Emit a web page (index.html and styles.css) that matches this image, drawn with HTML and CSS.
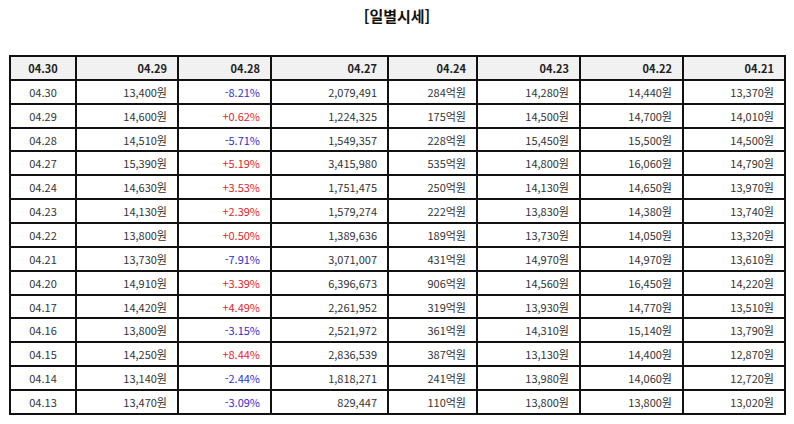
FILE: index.html
```html
<!DOCTYPE html>
<html lang="ko">
<head>
<meta charset="utf-8">
<title>일별시세</title>
<link rel="stylesheet" href="styles.css">
</head>
<body>
<div class="page">
  <h1 class="title">[일별시세]</h1>
  <table class="daily">
    <colgroup>
      <col class="c1"><col class="c2"><col class="c3"><col class="c4">
      <col class="c5"><col class="c6"><col class="c7"><col class="c8">
    </colgroup>
    <thead>
      <tr>
        <th class="center">04.30</th><th>04.29</th><th>04.28</th><th>04.27</th>
        <th>04.24</th><th>04.23</th><th>04.22</th><th>04.21</th>
      </tr>
    </thead>
    <tbody>
      <tr><td class="center">04.30</td><td>13,400원</td><td class="down">-8.21%</td><td>2,079,491</td><td>284억원</td><td>14,280원</td><td>14,440원</td><td>13,370원</td></tr>
      <tr><td class="center">04.29</td><td>14,600원</td><td class="up">+0.62%</td><td>1,224,325</td><td>175억원</td><td>14,500원</td><td>14,700원</td><td>14,010원</td></tr>
      <tr><td class="center">04.28</td><td>14,510원</td><td class="down">-5.71%</td><td>1,549,357</td><td>228억원</td><td>15,450원</td><td>15,500원</td><td>14,500원</td></tr>
      <tr><td class="center">04.27</td><td>15,390원</td><td class="up">+5.19%</td><td>3,415,980</td><td>535억원</td><td>14,800원</td><td>16,060원</td><td>14,790원</td></tr>
      <tr><td class="center">04.24</td><td>14,630원</td><td class="up">+3.53%</td><td>1,751,475</td><td>250억원</td><td>14,130원</td><td>14,650원</td><td>13,970원</td></tr>
      <tr><td class="center">04.23</td><td>14,130원</td><td class="up">+2.39%</td><td>1,579,274</td><td>222억원</td><td>13,830원</td><td>14,380원</td><td>13,740원</td></tr>
      <tr><td class="center">04.22</td><td>13,800원</td><td class="up">+0.50%</td><td>1,389,636</td><td>189억원</td><td>13,730원</td><td>14,050원</td><td>13,320원</td></tr>
      <tr><td class="center">04.21</td><td>13,730원</td><td class="down">-7.91%</td><td>3,071,007</td><td>431억원</td><td>14,970원</td><td>14,970원</td><td>13,610원</td></tr>
      <tr><td class="center">04.20</td><td>14,910원</td><td class="up">+3.39%</td><td>6,396,673</td><td>906억원</td><td>14,560원</td><td>16,450원</td><td>14,220원</td></tr>
      <tr><td class="center">04.17</td><td>14,420원</td><td class="up">+4.49%</td><td>2,261,952</td><td>319억원</td><td>13,930원</td><td>14,770원</td><td>13,510원</td></tr>
      <tr><td class="center">04.16</td><td>13,800원</td><td class="down">-3.15%</td><td>2,521,972</td><td>361억원</td><td>14,310원</td><td>15,140원</td><td>13,790원</td></tr>
      <tr><td class="center">04.15</td><td>14,250원</td><td class="up">+8.44%</td><td>2,836,539</td><td>387억원</td><td>13,130원</td><td>14,400원</td><td>12,870원</td></tr>
      <tr><td class="center">04.14</td><td>13,140원</td><td class="down">-2.44%</td><td>1,818,271</td><td>241억원</td><td>13,980원</td><td>14,060원</td><td>12,720원</td></tr>
      <tr><td class="center">04.13</td><td>13,470원</td><td class="down">-3.09%</td><td>829,447</td><td>110억원</td><td>13,800원</td><td>13,800원</td><td>13,020원</td></tr>
    </tbody>
  </table>
</div>
</body>
</html>
```

FILE: styles.css
```css
html, body {
  margin: 0;
  padding: 0;
  background: #ffffff;
}

body {
  font-family: "Noto Sans CJK KR", "Noto Sans", sans-serif;
  color: #333333;
}

.page {
  padding: 6px 9px 0 9px;
}

.title {
  margin: 0;
  font-size: 15px;
  line-height: 20px;
  font-weight: 700;
  text-align: center;
  color: #111111;
}

.daily {
  margin-top: 29px;
  width: 775px;
  table-layout: fixed;
  border-collapse: collapse;
  font-size: 11px;
}

.c1 { width: 66px; }
.c2 { width: 102px; }
.c3 { width: 93px; }
.c4 { width: 117px; }
.c5 { width: 89px; }
.c6 { width: 103px; }
.c7 { width: 103px; }
.c8 { width: 102px; }

.daily tr {
  height: 23.87px;
}

.daily th,
.daily td {
  border: 2px solid #111111;
  padding: 0 10px 0 4px;
  text-align: right;
  white-space: nowrap;
  line-height: 14px;
}

.daily th {
  background: #f1f1f1;
  font-weight: 700;
  color: #222222;
}

.daily .center {
  text-align: center;
  padding: 0;
}

.daily .up {
  color: #e0262b;
}

.daily .down {
  color: #2f2fc8;
}
```
